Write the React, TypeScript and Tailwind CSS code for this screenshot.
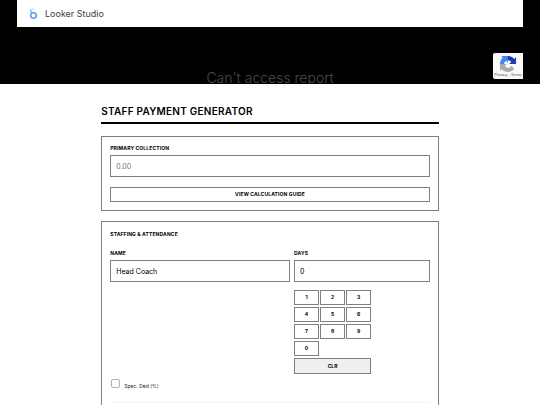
import { useState } from 'react';

const digits = ['1', '2', '3', '4', '5', '6', '7', '8', '9', '0'];

function LookerLogo() {
  return (
    <svg className="h-3 w-3" viewBox="0 0 24 24" fill="none" aria-hidden="true">
      <circle cx="13" cy="15" r="5.6" stroke="#5b96f5" strokeWidth="3" />
      <path d="M10 10 8 6.500" stroke="#78abf7" strokeWidth="3" />
      <circle cx="7.600" cy="5" r="2" fill="#8ab8f8" />
      <path d="M9 1.500c2-.8 4-.3 5 1.500" stroke="#a9cbfa" strokeWidth="2" />
    </svg>
  );
}

function RecaptchaBadge() {
  return (
    <div className="absolute right-0 bottom-[5px] flex h-[26px] w-[30px] flex-col items-center rounded-l-xs bg-[#f9f9f9] pt-[3px]">
      <svg className="h-4 w-4 shrink-0" viewBox="0 0 64 64" aria-hidden="true">
        <path
          fill="#1c3aa9"
          d="M64 31.955l-.033-1.37V4.687l-7.16 7.16C50.948 4.674 42.033.093 32.05.093c-10.4 0-19.622 4.96-25.458 12.64l11.736 11.86a15.55 15.55 0 0 1 4.754-5.334c2.05-1.6 4.952-2.906 8.968-2.906.485 0 .86.057 1.135.163 4.976.393 9.288 3.14 11.828 7.124l-8.307 8.307L64 31.953"
        />
        <path
          fill="#4285f4"
          d="M31.862.094l-1.37.033H4.594l7.16 7.16C4.58 13.147 0 22.06 0 32.046c0 10.4 4.96 19.622 12.64 25.458L24.5 45.768a15.55 15.55 0 0 1-5.334-4.754c-1.6-2.05-2.906-4.952-2.906-8.968 0-.485.057-.86.163-1.135.393-4.976 3.14-9.288 7.124-11.828l8.307 8.307L31.86.095"
        />
        <path
          fill="#ababab"
          d="M.001 32.045l.033 1.37v25.898l7.16-7.16c5.86 7.173 14.774 11.754 24.76 11.754 10.4 0 19.622-4.96 25.458-12.64l-11.736-11.86a15.55 15.55 0 0 1-4.754 5.334c-2.05 1.6-4.952 2.906-8.968 2.906-.485 0-.86-.057-1.135-.163-4.976-.393-9.288-3.14-11.828-7.124l8.307-8.307c-10.522.04-22.4.066-27.295-.005"
        />
      </svg>
      <span className="font-['Liberation_Sans',sans-serif] text-[4px] leading-[5px] whitespace-nowrap text-[#555]">
        Privacy - Terms
      </span>
    </div>
  );
}

function ReportBanner() {
  return (
    <section className="relative h-[84px] shrink-0 overflow-hidden bg-black px-[17px]">
      <header className="flex h-[27px] items-center gap-[6px] bg-white pl-[10px]">
        <LookerLogo />
        <span className="text-[9px] leading-3 text-[#3c4043]">Looker Studio</span>
      </header>
      <div className="relative h-[57px]">
        <h2 className="pt-[42px] text-center text-[14px] leading-[18px] font-light text-[#4a4d50]">
          Can't access report
        </h2>
        <RecaptchaBadge />
      </div>
    </section>
  );
}

function App() {
  const [days, setDays] = useState('0');

  const press = (digit: string) => setDays(days === '0' ? digit : days + digit);

  return (
    <div className="h-screen overflow-hidden bg-white font-['Inter','Liberation_Sans',sans-serif] text-black">
      <ReportBanner />
      <main className="mx-auto w-5/8 pt-5">
        <h1 className="border-b-2 border-black pb-1 text-[10px] leading-[14px] font-semibold tracking-wide">
          STAFF PAYMENT GENERATOR
        </h1>

        <section className="mt-3 border border-[#808080] p-2">
          <label htmlFor="collection" className="block text-[5px] leading-[7px] font-bold tracking-wide">
            PRIMARY COLLECTION
          </label>
          <input
            id="collection"
            placeholder="0.00"
            className="mt-[3px] block h-[22px] w-full border border-[#808080] px-[5px] text-[7px] placeholder:text-[#757575]"
          />
          <button
            type="button"
            className="mt-[10px] block h-[15px] w-full border border-[#808080] text-[5px] leading-[7px] font-bold tracking-wide"
          >
            VIEW CALCULATION GUIDE
          </button>
        </section>

        <section className="mt-[10px] border border-[#808080] p-2">
          <h2 className="text-[5px] leading-[9px] font-bold tracking-wide">STAFFING &amp; ATTENDANCE</h2>

          <div className="mt-[11px] grid grid-cols-[53fr_40fr] gap-1">
            <div>
              <label htmlFor="name" className="block text-[5px] leading-[7px] font-bold tracking-wide">
                NAME
              </label>
              <input
                id="name"
                defaultValue="Head Coach"
                className="mt-[3px] block h-[22px] w-full border border-[#808080] px-[5px] text-[7px]"
              />
            </div>
            <div>
              <label htmlFor="days" className="block text-[5px] leading-[7px] font-bold tracking-wide">
                DAYS
              </label>
              <input
                id="days"
                value={days}
                onChange={(e) => setDays(e.target.value)}
                className="mt-[3px] block h-[22px] w-full border border-[#808080] px-[5px] text-[7px]"
              />
              <div className="mt-2 grid w-[77px] grid-cols-3 gap-x-px gap-y-[2px]">
                {digits.map((digit) => (
                  <button
                    key={digit}
                    type="button"
                    onClick={() => press(digit)}
                    className="h-[15px] border border-[#808080] text-[5px] leading-[7px] font-bold"
                  >
                    {digit}
                  </button>
                ))}
                <button
                  type="button"
                  onClick={() => setDays('0')}
                  className="col-span-3 h-4 border border-[#808080] bg-[#efefef] text-[5px] leading-[7px] font-bold"
                >
                  CLR
                </button>
              </div>
            </div>
          </div>

          <div className="mt-[5px] flex items-start gap-1 border-b border-[#f4f4f4] pb-3 pl-px">
            <input
              id="deduction"
              type="checkbox"
              className="h-[9px] w-[9px] appearance-none rounded-[2px] border border-[#b0b0b0] bg-white checked:bg-black"
            />
            <label htmlFor="deduction" className="pt-[3px] text-[5px] leading-[8px] text-[#222]">
              Spec. Ded (%)
            </label>
          </div>
          <div className="h-10" />
        </section>
      </main>
    </div>
  );
}

export default App;
